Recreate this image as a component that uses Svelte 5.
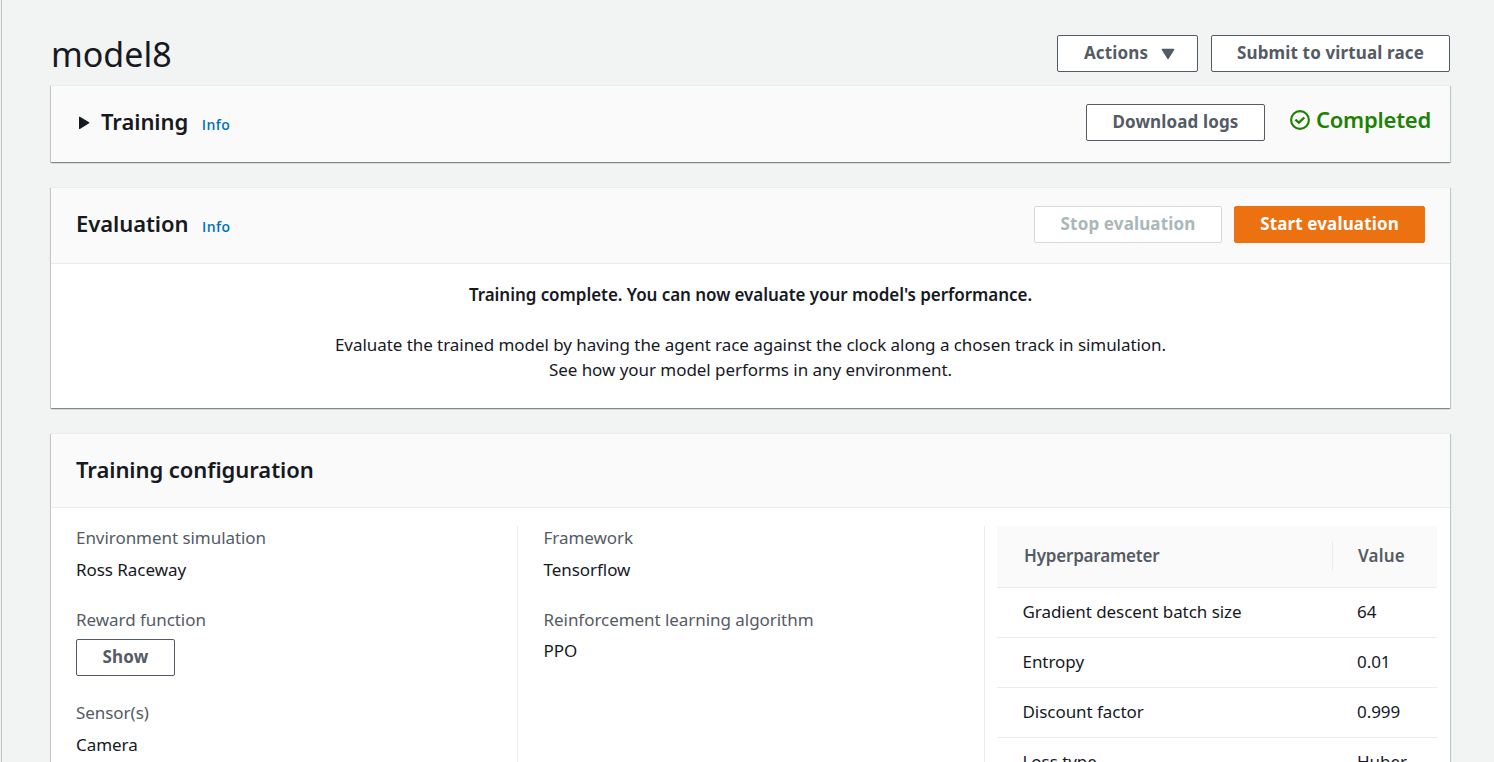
<script>
  const first = [
    { label: 'Environment simulation', value: 'Ross Raceway' },
    { label: 'Reward function', button: 'Show' },
    { label: 'Sensor(s)', value: 'Camera' }
  ];
  const second = [
    { label: 'Framework', value: 'Tensorflow' },
    { label: 'Reinforcement learning algorithm', value: 'PPO', tight: true }
  ];
  const hyperparameters = [
    ['Gradient descent batch size', '64'],
    ['Entropy', '0.01'],
    ['Discount factor', '0.999'],
    ['Loss type', 'Huber']
  ];
</script>

{#snippet fields(items)}
  <div class="column">
    {#each items as item}
      <div class="field" class:tight={item.tight} class:with-button={item.button}>
        <div class="label">{item.label}</div>
        {#if item.button}
          <button class="btn show">{item.button}</button>
        {:else}
          <div class="value">{item.value}</div>
        {/if}
      </div>
    {/each}
  </div>
{/snippet}

<main class="page">
  <header class="title-bar">
    <h1>model8</h1>
    <div class="buttons">
      <button class="btn actions">
        <span>Actions</span>
        <svg width="14" height="12" viewBox="0 0 14 12"><path d="M1.5 1.5h11L7 10.2z" fill="#545b64" stroke="#545b64" stroke-width="1.6" stroke-linejoin="round" /></svg>
      </button>
      <button class="btn submit">Submit to virtual race</button>
    </div>
  </header>

  <section class="card">
    <div class="card-head training">
      <svg class="caret" width="12" height="14" viewBox="0 0 12 14"><path d="M1.6 1.2v11.2L10.8 6.8z" fill="#16191f" stroke="#16191f" stroke-width="1.2" stroke-linejoin="round" /></svg>
      <h2>Training</h2>
      <span class="info">Info</span>
      <button class="btn download">Download logs</button>
      <div class="status">
        <svg width="22" height="22" viewBox="0 0 22 22" fill="none" stroke="#1d8102" stroke-width="2.1"><circle cx="11" cy="11" r="8.9" /><path d="M6.4 10.7l3.5 3 5.4-5.2" stroke-width="2.3" /></svg>
        <span>Completed</span>
      </div>
    </div>
  </section>

  <section class="card">
    <div class="card-head ruled evaluation">
      <h2>Evaluation</h2>
      <span class="info">Info</span>
      <button class="btn stop" disabled>Stop evaluation</button>
      <button class="btn start">Start evaluation</button>
    </div>
    <div class="message">
      <strong>Training complete. You can now evaluate your model's performance.</strong>
      <p>Evaluate the trained model by having the agent race against the clock along a chosen track in simulation.<br />See how your model performs in any environment.</p>
    </div>
  </section>

  <section class="card configuration">
    <div class="card-head ruled config-head"><h2>Training configuration</h2></div>
    <div class="config">
      {@render fields(first)}
      {@render fields(second)}
      <div class="params">
        <div class="row head"><span>Hyperparameter</span><span class="val">Value</span></div>
        {#each hyperparameters as [name, value]}
          <div class="row"><span>{name}</span><span class="val">{value}</span></div>
        {/each}
      </div>
    </div>
  </section>
</main>

<style>
  :global(body) { margin: 0; background: #f2f3f3; }
  :global(html), :global(body) { overflow: hidden; }
  .page {
    box-sizing: border-box;
    height: 762px;
    overflow: hidden;
    margin-left: 1px;
    padding: 0 44px 0 49px;
    border-left: 1px solid #bfc5c5;
    background: #f2f3f3;
    color: #16191f;
    font: 400 17px/25px "Noto Sans", sans-serif;
    letter-spacing: -0.05px;
  }
  h1, h2, p { margin: 0; }
  h1 { font-size: 34px; line-height: 40px; font-weight: 400; margin-top: -1px; letter-spacing: 0; }
  h2 { font-size: 22px; line-height: 28px; font-weight: 600; letter-spacing: -0.06px; }
  .title-bar { display: flex; justify-content: space-between; height: 50px; padding-top: 35px; }
  .buttons { display: flex; gap: 13px; align-items: flex-start; }
  .btn {
    box-sizing: border-box;
    height: 37px;
    padding: 0 0 2px;
    display: flex;
    align-items: center;
    justify-content: center;
    border: 1px solid #545b64;
    border-radius: 2px;
    background: #fff;
    color: #545b64;
    font: 700 17px/25px "Noto Sans", sans-serif;
    letter-spacing: 0.14px;
    white-space: nowrap;
  }
  .actions { width: 141px; gap: 13px; }
  .actions svg { margin-top: 3px; margin-right: -4px; }
  .submit { width: 239px; }
  .card {
    margin-bottom: 25px;
    width: 1399px;
    border-top: 1px solid #eaeded;
    background: #fff;
    box-sizing: border-box;
    box-shadow: 0 1px 1px 0 rgba(0, 28, 36, 0.3), 1px 1px 1px 0 rgba(0, 28, 36, 0.15), -1px 1px 1px 0 rgba(0, 28, 36, 0.15);
  }
  .card-head { display: flex; align-items: flex-start; background: #fafafa; box-sizing: border-box; }
  .ruled { border-bottom: 1px solid #eaeded; }
  .training { height: 76px; padding: 18px 19px 0 27px; }
  .training h2 { margin: 3px 0 0 11px; }
  .caret { margin-top: 12px; }
  .info { color: #0073bb; font: 600 14px/20px "Open Sans", sans-serif; letter-spacing: 0.4px; margin: 11px 0 0 13.5px; }
  .download { width: 179px; margin-left: auto; }
  .status { display: flex; align-items: center; gap: 5px; margin: 1px 0 0 24px; height: 28px; color: #1d8102; font-size: 22px; font-weight: 600; letter-spacing: -0.24px; }
  .status svg { margin-top: 2px; }
  .evaluation { height: 76px; padding: 18px 25px 0; }
  .evaluation h2 { margin: 3px 0 0; }
  .stop { width: 188px; margin-left: auto; color: #aab7b8; border-color: #d5dbdb; }
  .start { width: 191px; margin-left: 12px; background: #ec7211; border-color: #ec7211; color: #fff; }
  .message { height: 144px; box-sizing: border-box; padding-top: 18px; text-align: center; }
  .message strong { display: block; font-weight: 600; letter-spacing: -0.055px; margin-bottom: 25px; }
  .config-head { height: 74px; padding: 21px 25px 0; }
  .config { display: grid; grid-template-columns: 467px 467px 1fr; padding-top: 18px; height: 300px; }
  .column { border-right: 1px solid #eaeded; padding-left: 25px; display: flex; flex-direction: column; }
  .column + .column { padding-left: 25.5px; }
  .field { height: 82px; display: flex; flex-direction: column; gap: 7px; align-items: flex-start; flex: none; }
  .tight { gap: 6px; }
  .with-button { height: 93px; }
  .show { width: 99px; }
  .label { color: #545b64; height: 25px; margin-top: -1px; }
  .params { margin: 0 13px 0 12px; }
  .row { display: flex; height: 50px; box-sizing: border-box; border-bottom: 1px solid #eaeded; padding: 11px 0 0 25.5px; }
  .row .val { margin-left: auto; width: 80px; flex: none; }
  .head { height: 62px; padding: 15px 0 0 27px; background: #fafafa; color: #545b64; font-weight: 600; line-height: 30px; letter-spacing: -0.2px; }
  .head .val { box-sizing: border-box; width: 105px; padding-left: 25px; height: 30px; border-left: 1px solid #eaeded; letter-spacing: 0.2px; }
</style>
